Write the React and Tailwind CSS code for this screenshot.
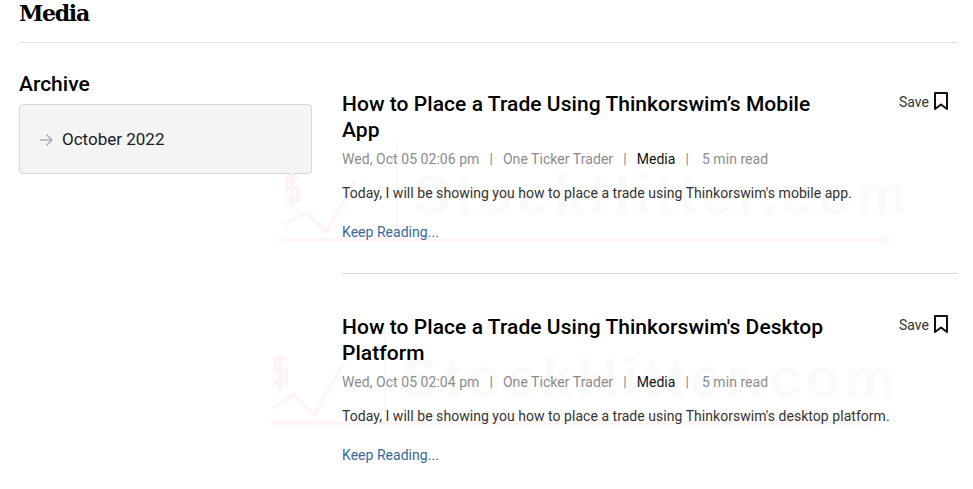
import React from "react";

const posts = [
  {
    title: "How to Place a Trade Using Thinkorswim’s Mobile App",
    date: "Wed, Oct 05 02:06 pm",
    desc: "Today, I will be showing you how to place a trade using Thinkorswim's mobile app.",
    mark: "left-[-59px] top-[52px]",
    border: true,
  },
  {
    title: "How to Place a Trade Using Thinkorswim's Desktop Platform",
    date: "Wed, Oct 05 02:04 pm",
    desc: "Today, I will be showing you how to place a trade using Thinkorswim's desktop platform.",
    mark: "left-[-71px] top-[12px]",
    border: false,
  },
];

function Watermark({ className }) {
  return (
    <div className={`absolute w-[640px] h-[105px] ${className}`}>
      <svg className="absolute left-0 top-0" width="640" height="105" viewBox="0 0 640 105" fill="none">
        <path d="M1 82 L23 69 L43 89 L72 38" stroke="#fef6f6" strokeWidth="4" />
        <path d="M9 27 V65 M16 33 H4 V45 H15 V57 H2" stroke="#fef3f3" strokeWidth="4" />
        <path d="M114 0 V97" stroke="#f9f9f9" strokeWidth="2" />
        <path d="M0 97 H603" stroke="#fff5f5" strokeWidth="5" />
      </svg>
      <span className="absolute left-[130px] top-[24px] text-[56px] leading-[56px] font-bold tracking-[4.8px] whitespace-nowrap text-[#fafafa] font-['Liberation_Sans',sans-serif]">
        StockHitter.com
      </span>
    </div>
  );
}

function Post({ post }) {
  return (
    <article className={`relative ${post.border ? "border-b border-[#dcdcdc] h-[183px] mb-[40px]" : ""}`}>
      <Watermark className={post.mark} />
      <div className="relative flex justify-between">
        <h2 className="w-[490px] text-[21px] leading-[26px] font-medium tracking-[0.05px] text-black">{post.title}</h2>
        <button className="flex items-start gap-[4px] mt-[1px] text-[14px] leading-[20px] text-[#333]">
          Save
          <svg width="16" height="20" viewBox="0 0 16 20" fill="none" className="mr-[9px] mt-[-1px]">
            <path d="M2 2 H14 V18 L8 13.5 L2 18 Z" stroke="#111" strokeWidth="2" strokeLinejoin="round" />
          </svg>
        </button>
      </div>
      <div className="relative mt-[6px] flex items-center text-[14px] leading-[20px] tracking-[0.05px] text-[#8c8c8c]">
        <span>{post.date}</span>
        <span className="mx-[10px]">|</span>
        <span>One Ticker Trader</span>
        <span className="mx-[10px]">|</span>
        <span className="text-[#111]">Media</span>
        <span className="mx-[10px]">|</span>
        <span className="ml-[3px]">5 min read</span>
      </div>
      <p className="relative mt-[14px] text-[14px] leading-[20px] tracking-[0.04px] text-[#333]">{post.desc}</p>
      <a href="#" className="relative block mt-[19px] text-[14px] leading-[20px] tracking-[0.03px] text-[#38689a]">Keep Reading...</a>
    </article>
  );
}

export default function App() {
  return (
    <div className="w-[973px] h-[489px] overflow-hidden bg-white pl-[19px] pr-[15px] font-['Roboto',sans-serif]">
      <h1 className="h-[43px] border-b border-[#e2e2e2] text-[22px] leading-[26px] font-bold text-black font-['DejaVu_Serif',serif] tracking-[-1.3px]">Media</h1>
      <div className="flex mt-[29px]">
        <aside className="w-[293px] shrink-0">
          <h3 className="text-[21px] leading-[24px] font-medium text-black">Archive</h3>
          <div className="mt-[8px] h-[70px] flex items-center gap-[9px] pl-[19px] pt-[1px] bg-[#f4f4f4] border border-[#d6d6d6] rounded-[4px]">
            <svg width="14" height="14" viewBox="0 0 14 14" fill="none">
              <path d="M1 7 H13 M7.5 1.5 L13 7 L7.5 12.5" stroke="#adadad" strokeWidth="1.5" />
            </svg>
            <span className="text-[17px] text-[#1a1a2a]">October 2022</span>
          </div>
        </aside>
        <main className="ml-[30px] flex-1 pt-[19px]">
          {posts.map((p) => <Post key={p.date} post={p} />)}
        </main>
      </div>
    </div>
  );
}
